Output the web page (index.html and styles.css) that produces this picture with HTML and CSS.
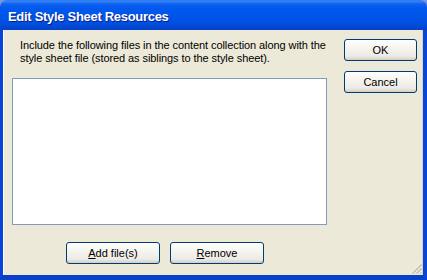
FILE: index.html
```html
<!DOCTYPE html>
<html lang="en">
<head>
    <meta charset="UTF-8">
    <title>Edit Style Sheet Resources</title>
    <link rel="stylesheet" href="styles.css">
</head>
<body>
    <div class="window">
        <div class="titlebar">
            <span class="title">Edit Style Sheet Resources</span>
        </div>
        <div class="frame">
            <div class="main">
                <p class="intro">Include the following files in the content collection along with the<br>style sheet file (stored as siblings to the style sheet).</p>
                <div class="listbox"></div>
                <div class="list-actions">
                    <button class="btn btn-wide"><u>A</u>dd file(s)</button>
                    <button class="btn btn-wide"><u>R</u>emove</button>
                </div>
            </div>
            <div class="side">
                <button class="btn">OK</button>
                <button class="btn">Cancel</button>
            </div>
            <svg class="grip" width="12" height="12" viewBox="0 0 12 12">
                <g stroke="#fff" stroke-width="1">
                    <line x1="11.5" y1="1" x2="1" y2="11.5"/>
                    <line x1="11.5" y1="5" x2="5" y2="11.5"/>
                    <line x1="11.5" y1="9" x2="9" y2="11.5"/>
                </g>
                <g stroke="#b8b4a2" stroke-width="1">
                    <line x1="11.5" y1="2" x2="2" y2="11.5"/>
                    <line x1="11.5" y1="3" x2="3" y2="11.5"/>
                    <line x1="11.5" y1="6" x2="6" y2="11.5"/>
                    <line x1="11.5" y1="7" x2="7" y2="11.5"/>
                    <line x1="11.5" y1="10" x2="10" y2="11.5"/>
                </g>
            </svg>
        </div>
    </div>
</body>
</html>
```

FILE: styles.css
```css
* {
    margin: 0;
    padding: 0;
    box-sizing: border-box;
}

body {
    width: 427px;
    height: 280px;
    background: #7a96df;
    font-family: 'Liberation Sans', Arial, sans-serif;
    font-size: 11px;
    overflow: hidden;
}

.window {
    width: 427px;
    height: 280px;
    display: flex;
    flex-direction: column;
    border-radius: 7px 7px 0 0;
    overflow: hidden;
}

.titlebar {
    height: 30px;
    flex: none;
    display: flex;
    align-items: center;
    padding: 1px 0 0 8px;
    background: linear-gradient(to bottom,
        #3d8bf5 0px, #1a6af2 2px, #0a5eef 4px, #0058ee 8px,
        #0055e8 16px, #004fdf 22px, #0047d4 26px, #0a3fc2 30px);
    border-top: 1px solid #2d7ef6;
}

.title {
    color: #fff;
    font-family: 'Liberation Sans', Arial, sans-serif;
    font-weight: bold;
    font-size: 13px;
    letter-spacing: -0.3px;
    text-shadow: 1px 1px 0 #0a1e8c;
}

.frame {
    flex: 1;
    position: relative;
    display: flex;
    background: #ece9d8;
    border-left: 3px solid #0846d8;
    border-right: 4px solid #0846d8;
    border-bottom: 5px solid #0840c8;
    box-shadow: inset 1px 0 0 #fff, inset -1px 0 0 #d8d2bd;
}

.main {
    width: 324px;
    padding: 9px 0 0 9px;
}

.intro {
    padding-left: 8px;
    line-height: 13px;
    color: #000;
    width: 330px;
    white-space: nowrap;
    letter-spacing: -0.08px;
}

.listbox {
    margin-top: 13px;
    width: 315px;
    height: 147px;
    background: #fff;
    border: 1px solid #7f9db9;
}

.list-actions {
    display: flex;
    gap: 10px;
    margin: 17px 0 0 54px;
}

.side {
    display: flex;
    flex-direction: column;
    gap: 10px;
    padding: 9px 0 0 17px;
}

.btn {
    width: 73px;
    height: 22px;
    border: 1px solid #003c74;
    border-radius: 3px;
    background: linear-gradient(to bottom, #ffffff 0%, #f5f4ef 40%, #ecebe6 80%, #d6d0c5 100%);
    font-family: 'Liberation Sans', Arial, sans-serif;
    font-size: 11px;
    color: #000;
    box-shadow: inset 0 -1px 0 #d6d0c5;
}

.btn-wide {
    width: 94px;
}

.grip {
    position: absolute;
    right: 1px;
    bottom: 1px;
}
```
